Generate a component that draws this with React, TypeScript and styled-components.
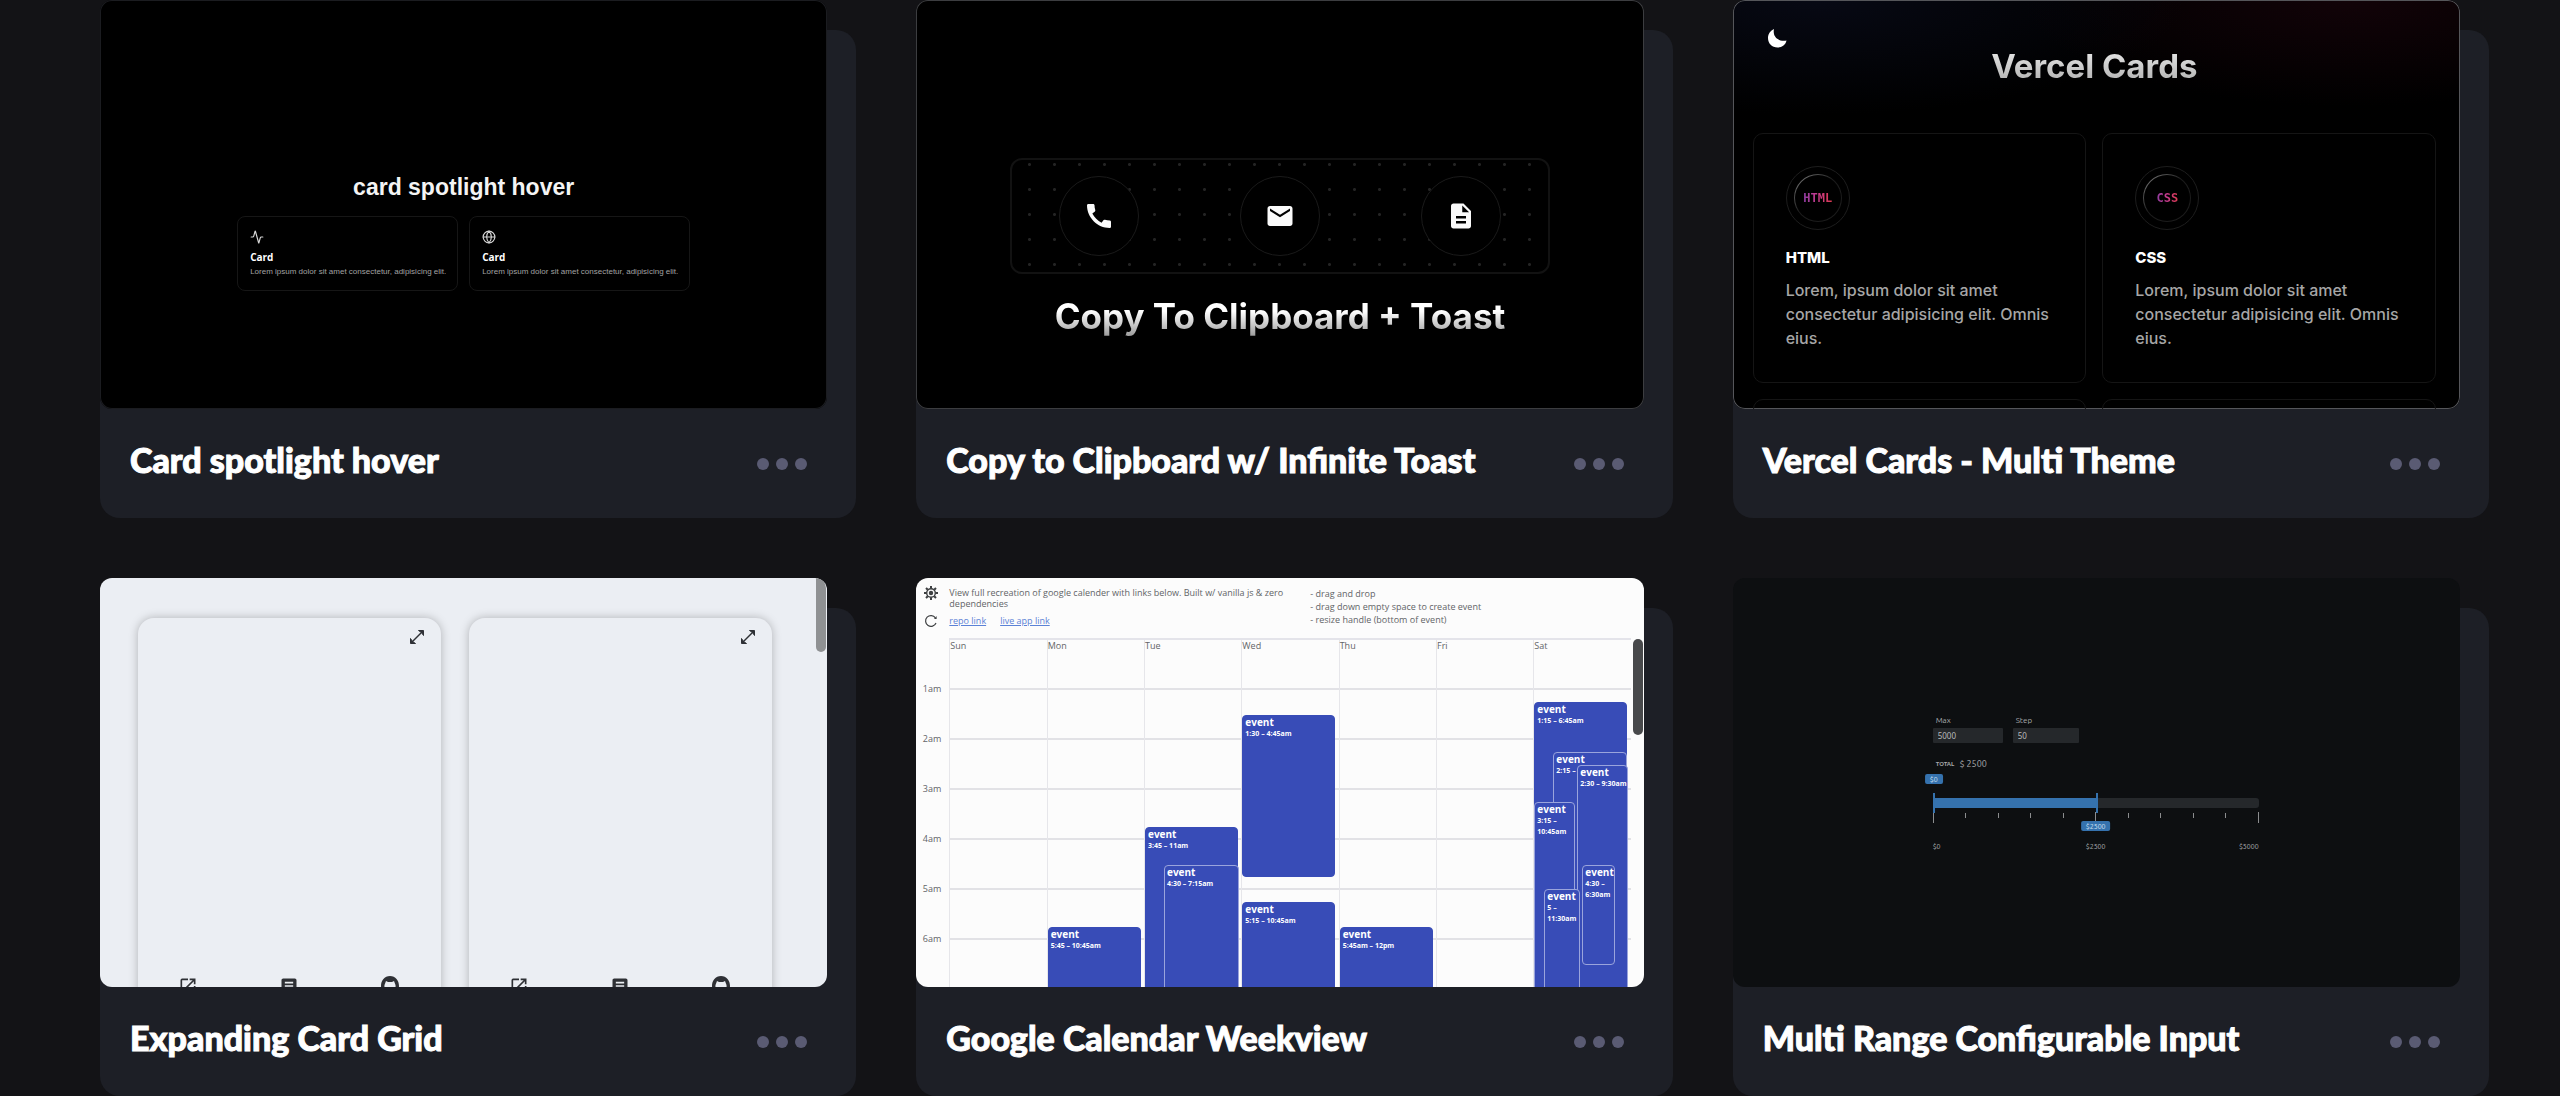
import React from "react";
import styled, { createGlobalStyle, css } from "styled-components";
import { Activity, Globe } from "lucide-react";
import { MdCall, MdEmail, MdDescription, MdOpenInNew, MdArticle } from "react-icons/md";

const GlobalStyle = createGlobalStyle`
  *, *::before, *::after { box-sizing: border-box; }
  body { margin: 0; background: #131316; color: #fff; font-family: Lato, sans-serif; overflow-x: hidden; }
  h1, h2, h3, h4, p, ul { margin: 0; padding: 0; }
  ul { list-style: none; }
  button { font: inherit; color: inherit; border: 0; padding: 0; background: none; cursor: pointer; }
`;

/* Page */

const Page = styled.main`
  display: grid;
  grid-template-columns: repeat(3, minmax(0, 1fr));
  column-gap: 60px;
  row-gap: 90px;
  padding: 30px 71px 0 100px;
`;

const Pen = styled.article`
  display: flex;
  flex-direction: column;
  background: #1d1f26;
  border-radius: 20px;
`;

const Thumb = styled.div<{ $bg: string; $edge?: string }>`
  position: relative;
  display: flex;
  flex-direction: column;
  margin: -30px 29px 0 0;
  aspect-ratio: 16 / 9;
  overflow: hidden;
  border-radius: 12px;
  background: ${(p) => p.$bg};
  ${(p) => p.$edge && css`box-shadow: inset 0 0 0 1px ${p.$edge};`}
`;

const Footer = styled.footer`
  display: flex;
  align-items: center;
  justify-content: space-between;
  height: 109px;
  padding: 0 49px 8px 30px;
`;

const PenTitle = styled.h2`
  font-size: 34px;
  line-height: 44px;
  font-weight: 900;
  -webkit-text-stroke: 1px #fff;
  white-space: nowrap;
`;

const More = styled.button`
  display: flex;
  gap: 7px;
  padding-top: 8px;
`;

const Dot = styled.span`
  width: 12px;
  height: 12px;
  border-radius: 50%;
  background: #5a5b73;
`;

/* Card spotlight */

const SpotBody = styled.div`
  display: flex;
  flex-direction: column;
  align-items: center;
  padding-top: 171px;
  gap: 13px;
  font-family: "Liberation Sans", Arial, sans-serif;
`;

const SpotTitle = styled.h3`
  font-size: 23px;
  line-height: 32px;
  font-weight: 700;
  color: #f4f4f4;
`;

const SpotRow = styled.div`
  display: grid;
  grid-template-columns: repeat(2, 221px);
  gap: 11px;
`;

const SpotCard = styled.div`
  display: flex;
  flex-direction: column;
  height: 75px;
  padding: 13px 12px 0;
  border: 1px solid #161616;
  border-radius: 8px;

  svg { color: #d6d6d6; }
`;

const SpotName = styled.h4`
  margin-top: 7px;
  font: 700 10px/12px "Open Sans", sans-serif;
`;

const SpotText = styled.p`
  margin-top: 4px;
  font-size: 8px;
  line-height: 10px;
  color: #a2a2a2;
  white-space: nowrap;
`;

/* Copy to clipboard */

const CopyBody = styled.div`
  display: flex;
  flex-direction: column;
  align-items: center;
  padding-top: 158px;
  gap: 18px;
  font-family: Inter, sans-serif;
`;

const DotPanel = styled.div`
  display: flex;
  align-items: center;
  justify-content: space-between;
  width: 540px;
  height: 116px;
  padding: 0 47px;
  border: 2px solid #121212;
  border-radius: 12px;
  background: radial-gradient(circle, #242424 1px, transparent 2px) 5px -8px / 25px 25px;
`;

const RoundButton = styled.button`
  display: grid;
  place-items: center;
  width: 80px;
  height: 80px;
  border: 1px solid #1a1a1a;
  border-radius: 50%;
  background: #000;
  color: #fafafa;
`;

const CopyTitle = styled.h3`
  font-size: 35px;
  line-height: 48px;
  font-weight: 700;
  color: transparent;
  background: linear-gradient(#fff 40%, #8c8c8c);
  background-clip: text;
  -webkit-background-clip: text;
`;

/* Vercel cards */

const VercelBody = styled.div`
  position: relative;
  display: flex;
  flex-direction: column;
  flex: 1;
  padding: 44px 24px 0 20px;
  font-family: Inter, sans-serif;
`;

const ThemeButton = styled.button`
  position: absolute;
  top: 27px;
  left: 33px;
  display: flex;
`;

const VercelTitle = styled.h3`
  align-self: center;
  font-size: 33px;
  line-height: 44px;
  font-weight: 700;
  color: transparent;
  background: linear-gradient(#f2f2f2, #a8a8a8);
  background-clip: text;
  -webkit-background-clip: text;
`;

const VercelGrid = styled.div`
  display: grid;
  grid-template-columns: repeat(2, minmax(0, 1fr));
  gap: 16px;
  margin-top: 45px;
`;

const VercelCard = styled.div`
  display: flex;
  flex-direction: column;
  height: 250px;
  padding: 32px 32px 0;
  border: 1px solid #151515;
  border-radius: 10px;
`;

const Ring = styled.div`
  display: grid;
  place-items: center;
  width: 64px;
  height: 64px;
  border: 1px solid #1d1d1d;
  border-radius: 50%;
`;

const InnerRing = styled.div`
  display: grid;
  place-items: center;
  width: 48px;
  height: 48px;
  border-radius: 50%;
  background:
    linear-gradient(#000, #000) padding-box,
    linear-gradient(135deg, #8a8a8a, #1c1c1c 45%) border-box;
  border: 1px solid transparent;
`;

const Badge = styled.span`
  font: 700 12px/14px "DejaVu Sans Mono", monospace;
  color: transparent;
  background: linear-gradient(90deg, #8a3ca0, #c83a8c 50%, #dc3a50);
  background-clip: text;
  -webkit-background-clip: text;
`;

const VercelName = styled.h4`
  margin-top: 18px;
  font-size: 15px;
  line-height: 20px;
  font-weight: 800;
`;

const VercelText = styled.p`
  margin-top: 10px;
  font-size: 16px;
  line-height: 24px;
  font-weight: 500;
  color: #a6a6a6;
`;

/* Expanding cards */

const ExpandGrid = styled.div`
  display: grid;
  grid-template-columns: repeat(2, 303px);
  column-gap: 28px;
  padding: 40px 0 0 38px;
`;

const ExpandCard = styled.div`
  display: flex;
  flex-direction: column;
  justify-content: space-between;
  height: 400px;
  padding: 11px 16px 22px;
  border-radius: 16px;
  background: #ebeef3;
  box-shadow: 0 0 10px rgba(0, 0, 0, 0.25);
  color: #2e3035;
`;

const ExpandTop = styled.div`
  display: flex;
  justify-content: flex-end;
`;

const ExpandIcons = styled.div`
  display: flex;
  justify-content: space-between;
  padding: 0 25px 0 24px;
`;

const ScrollThumb = styled.div<{ $top: string; $height: string; $color: string; $round?: string }>`
  position: absolute;
  top: ${(p) => p.$top};
  right: 1px;
  width: 10px;
  height: ${(p) => p.$height};
  border-radius: ${(p) => p.$round || "5px"};
  background: ${(p) => p.$color};
`;

/* Calendar */

const Calendar = styled.div`
  display: flex;
  flex-direction: column;
  flex: 1;
  font-family: "Open Sans", sans-serif;
  color: #626467;
`;

const CalTop = styled.div`
  display: grid;
  grid-template-columns: 33px 361px 1fr;
  height: 60px;
  padding-top: 8px;
  font-size: 9px;
  line-height: 11px;
`;

const CalTools = styled.div`
  display: flex;
  flex-direction: column;
  align-items: flex-start;
  gap: 14px;
  padding-left: 8px;
  color: #3e4042;

  button { display: flex; }
`;

const CalIntro = styled.div`
  display: flex;
  flex-direction: column;
  gap: 6px;
  padding-top: 1px;
`;

const CalLinks = styled.div`
  display: flex;
  gap: 14px;

  a { color: #5b82d6; }
`;

const CalNotes = styled.ul`
  padding-top: 1px;
  line-height: 13px;
`;

const CalBody = styled.div`
  position: relative;
  display: grid;
  grid-template-columns: 33px 1fr;
  margin-right: 13px;
  font-size: 9px;
  line-height: 12px;
`;

const Hours = styled.div`
  display: flex;
  flex-direction: column;
  padding: 45px 8px 0 0;
  text-align: right;
`;

const Hour = styled.span`
  height: 50px;
`;

const Days = styled.div`
  display: grid;
  grid-template-columns: repeat(7, minmax(0, 1fr));
  height: 400px;
  border-top: 2px solid #e4e4ea;
  background: repeating-linear-gradient(transparent 0 48px, #e2e2e6 48px 50px);
`;

const Day = styled.div`
  position: relative;
  border-left: 1px solid #e6e6ea;
`;

const EventBox = styled.div<{ $top: string; $height: string; $left?: string; $width?: string; $inset?: boolean }>`
  position: absolute;
  top: ${(p) => p.$top};
  left: ${(p) => p.$left || "0px"};
  width: ${(p) => p.$width || "93px"};
  height: ${(p) => p.$height};
  padding: 1px 0 0 2px;
  overflow: hidden;
  border: 1px solid ${(p) => (p.$inset ? "#9aa4dc" : "#384cb7")};
  border-radius: 4px;
  background: #384cb7;
  color: #fff;
  font-weight: 700;
`;

const EventName = styled.div`
  font-size: 10px;
  line-height: 11px;
`;

const EventTime = styled.div<{ $oneLine?: boolean }>`
  font-size: 7px;
  line-height: 11px;
  white-space: ${(p) => (p.$oneLine ? "nowrap" : "normal")};
`;

/* Range input */

const RangeBody = styled.div`
  display: flex;
  flex-direction: column;
  width: 326px;
  margin: 138px 0 0 200px;
  font-family: Ubuntu, "Noto Sans", sans-serif;
  font-size: 8px;
  line-height: 10px;
  color: #a9abad;
`;

const Fields = styled.div`
  display: flex;
  gap: 10px;
`;

const Field = styled.label<{ $width: string }>`
  display: flex;
  flex-direction: column;
  gap: 2px;
  width: ${(p) => p.$width};

  span { padding-left: 3px; }
`;

const NumberBox = styled.input`
  width: 100%;
  height: 15px;
  padding: 0 5px;
  border: 0;
  border-radius: 1px;
  background: #25282b;
  color: #b8babc;
  font: 8px/10px "Noto Sans", sans-serif;
`;

const Total = styled.div`
  display: flex;
  align-items: center;
  gap: 5px;
  margin-top: 16px;
  padding-left: 3px;
  font-size: 9px;

  b { font-size: 6px; }
`;

const Track = styled.div`
  position: relative;
  height: 10px;
  margin-top: 29px;
  border-radius: 3px;
  background: #25282b;
`;

const Fill = styled.div`
  width: 50%;
  height: 10px;
  background: #3572ae;
`;

const Handle = styled.div<{ $left: string }>`
  position: absolute;
  top: -5px;
  left: ${(p) => p.$left};
  width: 2px;
  height: 20px;
  background: #3572ae;
`;

const Tip = styled.output<{ $left: string; $top: string }>`
  position: absolute;
  top: ${(p) => p.$top};
  left: ${(p) => p.$left};
  padding: 0 5px;
  transform: translateX(-50%);
  border-radius: 2px;
  background: #3572ae;
  color: #cfe0f2;
  font-size: 7px;
  line-height: 10px;
`;

const Ticks = styled.div`
  display: flex;
  justify-content: space-between;
  height: 12px;
  margin-top: 4px;
`;

const Tick = styled.span<{ $tall: boolean }>`
  width: 1px;
  height: ${(p) => (p.$tall ? "11px" : "5px")};
  margin-top: ${(p) => (p.$tall ? "0" : "1px")};
  background: #8b8d8f;
`;

const Scale = styled.div`
  display: grid;
  grid-template-columns: repeat(3, 1fr);
  margin-top: 17px;
  font-size: 7px;

  span:nth-child(2) { text-align: center; }
  span:nth-child(3) { text-align: right; }
`;

function PenCard({ title, bg, edge, children }: { title: string; bg: string; edge?: string; children: React.ReactNode }) {
  return (
    <Pen>
      <Thumb $bg={bg} $edge={edge}>{children}</Thumb>
      <Footer>
        <PenTitle>{title}</PenTitle>
        <More type="button" aria-label="More options">
          <Dot /><Dot /><Dot />
        </More>
      </Footer>
    </Pen>
  );
}

function SpotlightPreview() {
  const icons = [Activity, Globe];
  return (
    <SpotBody>
      <SpotTitle>card spotlight hover</SpotTitle>
      <SpotRow>
        {icons.map((Icon, i) => (
          <SpotCard key={i}>
            <Icon size={14} strokeWidth={2} />
            <SpotName>Card</SpotName>
            <SpotText>Lorem ipsum dolor sit amet consectetur, adipisicing elit.</SpotText>
          </SpotCard>
        ))}
      </SpotRow>
    </SpotBody>
  );
}

function ClipboardPreview() {
  return (
    <CopyBody>
      <DotPanel>
        <RoundButton type="button" aria-label="Phone"><MdCall size={32} /></RoundButton>
        <RoundButton type="button" aria-label="Email"><MdEmail size={30} /></RoundButton>
        <RoundButton type="button" aria-label="Document"><MdDescription size={30} /></RoundButton>
      </DotPanel>
      <CopyTitle>Copy To Clipboard + Toast</CopyTitle>
    </CopyBody>
  );
}

function VercelPreview() {
  return (
    <VercelBody>
      <ThemeButton type="button" aria-label="Theme">
        <svg width="22" height="22" viewBox="0 0 22 22">
          <path d="M8 2C6.500 9 11 15 20.500 13.500C19.500 18 16 20.500 11.500 20.500C6 20.500 2 16.500 2 11C2 7 4.500 3.500 8 2Z" fill="#fff" />
        </svg>
      </ThemeButton>
      <VercelTitle>Vercel Cards</VercelTitle>
      <VercelGrid>
        {["HTML", "CSS"].map((name) => (
          <VercelCard key={name}>
            <Ring><InnerRing><Badge>{name}</Badge></InnerRing></Ring>
            <VercelName>{name}</VercelName>
            <VercelText>Lorem, ipsum dolor sit amet consectetur adipisicing elit. Omnis eius.</VercelText>
          </VercelCard>
        ))}
        <VercelCard />
        <VercelCard />
      </VercelGrid>
    </VercelBody>
  );
}

function GithubMark() {
  return (
    <svg width="20" height="20" viewBox="0 0 20 20">
      <path fillRule="evenodd" fill="currentColor" d="M10 0C15.500 0 19 4.500 19 10C19 15 15 20 10 20C5 20 1 15 1 10C1 4.500 4.500 0 10 0ZM6 5L4.500 9C4 13 6 16 10 16C14 16 16 13 15.500 9L14 5L12 6H8Z" />
    </svg>
  );
}

function ExpandPreview() {
  return (
    <>
      <ExpandGrid>
        {[0, 1].map((i) => (
          <ExpandCard key={i}>
            <ExpandTop>
              <svg width="16" height="16" viewBox="0 0 16 16" fill="none" stroke="currentColor" strokeWidth="1.500">
                <path d="M2 14L14 2" />
                <path fill="currentColor" d="M9.500 1.500H14.500V6.500L12.500 3.500ZM1.500 9.500V14.500H6.500L3.500 12.500Z" strokeWidth="1" />
              </svg>
            </ExpandTop>
            <ExpandIcons>
              <MdOpenInNew size={20} />
              <MdArticle size={20} />
              <GithubMark />
            </ExpandIcons>
          </ExpandCard>
        ))}
      </ExpandGrid>
      <ScrollThumb $top="0px" $height="74px" $color="#8f9193" $round="0 10px 5px 5px" />
    </>
  );
}

type Ev = { time: string; top: string; height: string; left?: string; width?: string; inset?: boolean; oneLine?: boolean };

const week: { day: string; events: Ev[] }[] = [
  { day: "Sun", events: [] },
  { day: "Mon", events: [{ time: "5:45 – 10:45am", top: "287px", height: "250px" }] },
  {
    day: "Tue",
    events: [
      { time: "3:45 – 11am", top: "187px", height: "362px" },
      { time: "4:30 – 7:15am", top: "225px", height: "137px", left: "19px", width: "75px", inset: true },
    ],
  },
  {
    day: "Wed",
    events: [
      { time: "1:30 – 4:45am", top: "75px", height: "162px" },
      { time: "5:15 – 10:45am", top: "262px", height: "275px" },
    ],
  },
  { day: "Thu", events: [{ time: "5:45am – 12pm", top: "287px", height: "312px" }] },
  { day: "Fri", events: [] },
  {
    day: "Sat",
    events: [
      { time: "1:15 – 6:45am", top: "62px", height: "275px" },
      { time: "2:15 –", top: "112px", height: "250px", left: "19px", width: "74px", inset: true },
      { time: "2:30 – 9:30am", top: "125px", height: "350px", left: "43px", width: "51px", inset: true, oneLine: true },
      { time: "3:15 – 10:45am", top: "162px", height: "375px", left: "0px", width: "41px", inset: true },
      { time: "4:30 – 6:30am", top: "225px", height: "100px", left: "48px", width: "33px", inset: true },
      { time: "5 – 11:30am", top: "249px", height: "325px", left: "10px", width: "36px", inset: true },
    ],
  },
];

function CalendarPreview() {
  return (
    <Calendar>
      <CalTop>
        <CalTools>
          <button type="button" aria-label="Theme">
            <svg width="14" height="14" viewBox="0 0 14 14" fill="none" stroke="currentColor">
              <circle cx="7" cy="7" r="4.300" strokeWidth="1.400" />
              <circle cx="7" cy="7" r="2.200" fill="currentColor" stroke="none" />
              <path strokeWidth="2" d="M7 0V2.500M7 11.500V14M0 7H2.500M11.500 7H14M2 2L3.800 3.800M10.200 10.200L12 12M12 2L10.200 3.800M3.800 10.200L2 12" />
            </svg>
          </button>
          <button type="button" aria-label="Reload">
            <svg width="14" height="14" viewBox="0 0 14 14" fill="none" stroke="currentColor" strokeWidth="1.200">
              <path d="M12 9A5.400 5.400 0 1 1 11.400 3.800" />
              <path d="M12.600 2V5H10Z" fill="currentColor" stroke="none" />
            </svg>
          </button>
        </CalTools>
        <CalIntro>
          <p>View full recreation of google calender with links below. Built w/ vanilla js &amp; zero<br />dependencies</p>
          <CalLinks><a href="#repo">repo link</a><a href="#app">live app link</a></CalLinks>
        </CalIntro>
        <CalNotes>
          <li>- drag and drop</li>
          <li>- drag down empty space to create event</li>
          <li>- resize handle (bottom of event)</li>
        </CalNotes>
      </CalTop>
      <CalBody>
        <Hours>
          {[1, 2, 3, 4, 5, 6].map((h) => <Hour key={h}>{h}am</Hour>)}
        </Hours>
        <Days>
          {week.map(({ day, events }) => (
            <Day key={day}>
              {day}
              {events.map((e) => (
                <EventBox key={e.time} $top={e.top} $height={e.height} $left={e.left} $width={e.width} $inset={e.inset}>
                  <EventName>event</EventName>
                  <EventTime $oneLine={e.oneLine}>{e.time}</EventTime>
                </EventBox>
              ))}
            </Day>
          ))}
        </Days>
      </CalBody>
      <ScrollThumb $top="61px" $height="96px" $color="#48494b" />
    </Calendar>
  );
}

function RangePreview() {
  return (
    <RangeBody>
      <Fields>
        <Field $width="70px"><span>Max</span><NumberBox defaultValue="5000" /></Field>
        <Field $width="66px"><span>Step</span><NumberBox defaultValue="50" /></Field>
      </Fields>
      <Total><b>TOTAL</b><span>$ 2500</span></Total>
      <Track>
        <Fill />
        <Handle $left="0" />
        <Handle $left="50%" />
        <Tip $left="1px" $top="-24px">$0</Tip>
        <Tip $left="50%" $top="23px">$2500</Tip>
      </Track>
      <Ticks>
        {Array.from({ length: 11 }, (_, i) => <Tick key={i} $tall={i % 5 === 0} />)}
      </Ticks>
      <Scale><span>$0</span><span>$2500</span><span>$5000</span></Scale>
    </RangeBody>
  );
}

const vercelBg =
  "radial-gradient(ellipse 50% 28% at 12% 0, #070914, transparent), radial-gradient(ellipse 45% 26% at 85% 0, #120308, transparent), #000";

export default function App() {
  return (
    <>
      <GlobalStyle />
      <Page>
        <PenCard title="Card spotlight hover" bg="#000" edge="#1b1c20"><SpotlightPreview /></PenCard>
        <PenCard title="Copy to Clipboard w/ Infinite Toast" bg="#000" edge="#3c3d40"><ClipboardPreview /></PenCard>
        <PenCard title="Vercel Cards - Multi Theme" bg={vercelBg} edge="#55565a"><VercelPreview /></PenCard>
        <PenCard title="Expanding Card Grid" bg="#ebeef3"><ExpandPreview /></PenCard>
        <PenCard title="Google Calendar Weekview" bg="#fcfcfc"><CalendarPreview /></PenCard>
        <PenCard title="Multi Range Configurable Input" bg="#0d0f11"><RangePreview /></PenCard>
      </Page>
    </>
  );
}
